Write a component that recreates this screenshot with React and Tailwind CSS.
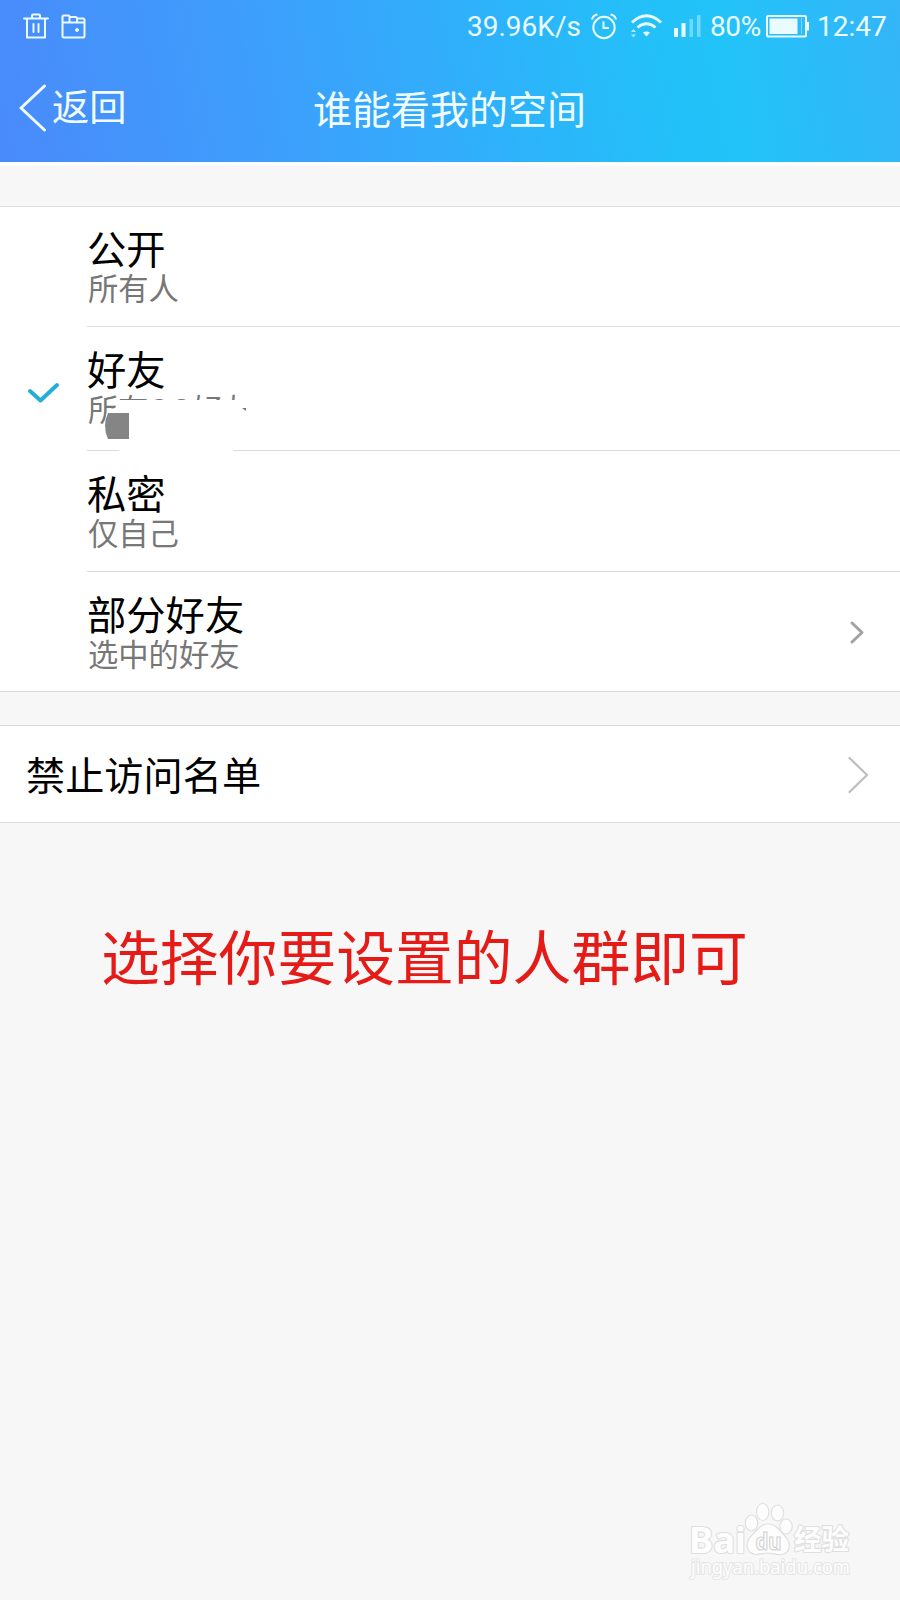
import React from 'react';

const CJK = "font-['Noto_Sans_CJK_SC',sans-serif]";

function StatusBar() {
  return (
    <div className="flex h-[52px] items-center justify-between pl-[23px] pr-[14px] text-[#eafcff]">
      <svg width="64" height="28" viewBox="0 0 64 28" fill="none" stroke="currentColor" strokeWidth="2" strokeLinejoin="round" strokeLinecap="round">
        <path d="M1 6.500H25M4 6.500V25.500H22V6.500M9 6V3.500Q9 2.500 10 2.500H16Q17 2.500 17 3.500V6M10.500 12V20M15.500 12V20" />
        <path d="M39.500 10.500V4.500Q39.500 3.500 40.500 3.500H45.500Q46.500 3.500 46.500 4.500V10M46.500 5H52.500Q54 5 54 6.500V10M54 6.500H60Q61.500 6.500 61.500 8V24Q61.500 25.500 60 25.500H41Q39.500 25.500 39.500 24V10.500H61" />
        <circle cx="54" cy="18" r="1.500" fill="currentColor" stroke="currentColor" strokeWidth="1" />
      </svg>
      <div className="flex items-center font-[Roboto,sans-serif] text-[28px] leading-[32px]">
        <span className="mt-[1px] w-[114px] whitespace-nowrap">39.96K/s</span>
        <svg className="ml-[9px]" width="28" height="28" viewBox="0 0 28 28" fill="none" stroke="currentColor" strokeWidth="2">
          <circle cx="14" cy="15.500" r="10.700" />
          <path d="M13.500 9.500V16H19M2 7.500Q3 3 7.500 2.500M20.500 2.500Q25 3 26 7.500" />
        </svg>
        <svg className="ml-[12px]" width="32" height="28" viewBox="0 0 32 28" fill="none" stroke="currentColor" strokeWidth="2.800">
          <path d="M2 10.500Q16.500 -3 31 10.500M7.500 15.500Q16.500 8 25.500 15.500" />
          <path d="M13 20.500Q16.500 18.500 20 20.500L16.500 24.500Z" fill="currentColor" stroke="none" />
          <path d="M1 20L3.500 17L6 20ZM1 22.500H6L3.500 25.500Z" fill="currentColor" stroke="none" opacity=".7" />
        </svg>
        <svg className="ml-[11px]" width="30" height="28" viewBox="0 0 30 28" fill="currentColor">
          <path d="M1 16H5V25H1ZM8.500 11H12.500V25H8.500Z" />
          <path d="M16.500 7H20V25H16.500ZM24 3H27.500V25H24Z" opacity=".4" />
        </svg>
        <span className="ml-[7px] mt-[1px] w-[53px] whitespace-nowrap tracking-[-0.4px]">80%</span>
        <svg className="ml-[2px]" width="45" height="28" viewBox="0 0 45 28" fill="none" stroke="currentColor" strokeWidth="2">
          <rect x="2" y="4" width="39" height="20.500" rx="1" />
          <path d="M4.500 6.500H32.500V22H4.500ZM42 10H44V18.500H42Z" fill="currentColor" stroke="none" />
          <path d="M36.500 6V22" strokeWidth="1" opacity=".4" />
        </svg>
        <span className="ml-[7px] mt-[1px] w-[69px] whitespace-nowrap">12:47</span>
      </div>
    </div>
  );
}

function Option({ title, sub, height, pad, line = true, tight = false, children }) {
  return (
    <div className={`relative flex bg-white pl-[87px] ${height}`}>
      {children}
      <div className={`flex-1 ${pad} ${line ? 'border-b-[1px] border-[#dcdcde]' : ''}`}>
        <div className="text-[39.3px] leading-[40px] text-black">{title}</div>
        <div className={`pl-[1px] text-[30.3px] leading-[41px] text-[#777] ${tight ? 'tracking-[-0.3px]' : ''}`}>{sub}</div>
      </div>
    </div>
  );
}

function Watermark() {
  return (
    <svg className="absolute left-[680px] top-[1495px]" width="190" height="90" viewBox="0 0 190 90" fill="#fdfdfd" stroke="#dfdfdf" strokeWidth="1.200">
      <g paintOrder="stroke" strokeWidth="2.200" strokeLinejoin="round">
        <text x="9" y="58" fontFamily="Noto Sans, sans-serif" fontWeight="700" fontSize="36" textLength="57" lengthAdjust="spacingAndGlyphs">Bai</text>
        <text x="114" y="55" fontFamily="Noto Sans CJK SC, sans-serif" fontWeight="700" fontSize="28" textLength="55" lengthAdjust="spacingAndGlyphs">经验</text>
        <text x="11" y="79" fontFamily="Noto Sans, sans-serif" fontSize="19" textLength="159" lengthAdjust="spacingAndGlyphs" stroke="#e6e6e6">jingyan.baidu.com</text>
      </g>
      <ellipse cx="71.500" cy="28" rx="6.200" ry="8" />
      <ellipse cx="82.700" cy="17" rx="6.200" ry="8.500" />
      <ellipse cx="97.500" cy="18" rx="6.200" ry="8" />
      <ellipse cx="106" cy="31.500" rx="6.200" ry="7.500" />
      <path d="M88 29C96 29 99 35 104 40C112 48 111 59 100 59.500C94 59.500 92 58 88 58C84 58 81 59.500 76 59.500C65 58 65 47 72 40C78 35 80 29 88 29Z" />
      <text x="75.500" y="54.500" fontFamily="Noto Sans, sans-serif" fontWeight="700" fontSize="23" textLength="26" lengthAdjust="spacingAndGlyphs" stroke="#d2d2d2">du</text>
    </svg>
  );
}

export default function App() {
  return (
    <div className={`relative h-[1600px] w-[900px] overflow-hidden bg-[#f7f7f7] ${CJK}`}>
      <header className="h-[162px] bg-[linear-gradient(79deg,#4a8afb_0%,#3ca0fc_32%,#22c1f9_74%,#22c3f9_80%,#34b5f8_100%)] text-[#f0fdff]">
        <StatusBar />
        <div className="grid h-[110px] grid-cols-[313px_1fr] items-start">
          <div className="flex items-center pl-[18px] pt-[31px]">
            <svg width="28" height="50" viewBox="0 0 28 50" fill="none" stroke="currentColor" strokeWidth="3" strokeLinecap="round" strokeLinejoin="round">
              <path d="M26.500 3L3 25L26.500 47" />
            </svg>
            <span className="ml-[6px] -mt-[6px] text-[37.200px] leading-[50px]">返回</span>
          </div>
          <h1 className="pt-[30px] text-[39px] font-normal leading-[50px]">谁能看我的空间</h1>
        </div>
      </header>

      <div className="h-[45px] border-b-[1px] border-t-4 border-b-[#dcdcde] border-t-[#fcfefe]" />

      <Option title="公开" sub="所有人" height="h-[120px]" pad="pt-[20px]" />
      <Option title="好友" sub="所有QQ好友" height="h-[124px]" pad="pt-[21px]" tight>
        <svg className="absolute left-[100px] top-[72px]" width="160" height="54" viewBox="0 0 160 54">
          <path d="M18 1H154V54H22L14 46L6 41V16L10 9.500H15Z" fill="#fff" />
          <path d="M8 14H29V40H8Q2 27 8 14Z" fill="#858585" />
          <path d="M142 9H146V12Z" fill="#777" />
          <path d="M133 51.500H160" stroke="#dcdcde" />
        </svg>
        <svg className="absolute left-[27px] top-[54px]" width="34" height="24" viewBox="0 0 34 24" fill="none" stroke="#25add8" strokeWidth="4" strokeLinecap="round" strokeLinejoin="round">
          <path d="M3 10L13.500 19.500L30 4" />
        </svg>
      </Option>
      <Option title="私密" sub="仅自己" height="h-[121px]" pad="pt-[21px]" />
      <Option title="部分好友" sub="选中的好友" height="h-[119px]" pad="pt-[21px]" line={false}>
        <svg className="absolute left-[849px] top-[48px]" width="16" height="26" viewBox="0 0 16 26" fill="none" stroke="#a2a2a2" strokeWidth="3" strokeLinecap="round" strokeLinejoin="round">
          <path d="M3 3L13 12.500L3 22" />
        </svg>
      </Option>

      <div className="h-[35px] border-y-[1px] border-[#d8d8d8]" />

      <div className="flex h-[96px] items-center justify-between bg-white pl-[26px] pr-[31px]">
        <span className="-mt-[3px] text-[39.2px] leading-[50px] text-black">禁止访问名单</span>
        <svg className="mt-[2px]" width="22" height="38" viewBox="0 0 22 38" fill="none" stroke="#bdbdbd" strokeWidth="2.200" strokeLinecap="round" strokeLinejoin="round">
          <path d="M2.500 2L20 19L2.500 36" />
        </svg>
      </div>
      <div className="border-t-[1px] border-[#dcdcde]" />

      <p className="pl-[101px] pt-[90px] text-[58.800px] leading-[84px] text-[#e51b18]">选择你要设置的人群即可</p>
      <Watermark />
    </div>
  );
}
